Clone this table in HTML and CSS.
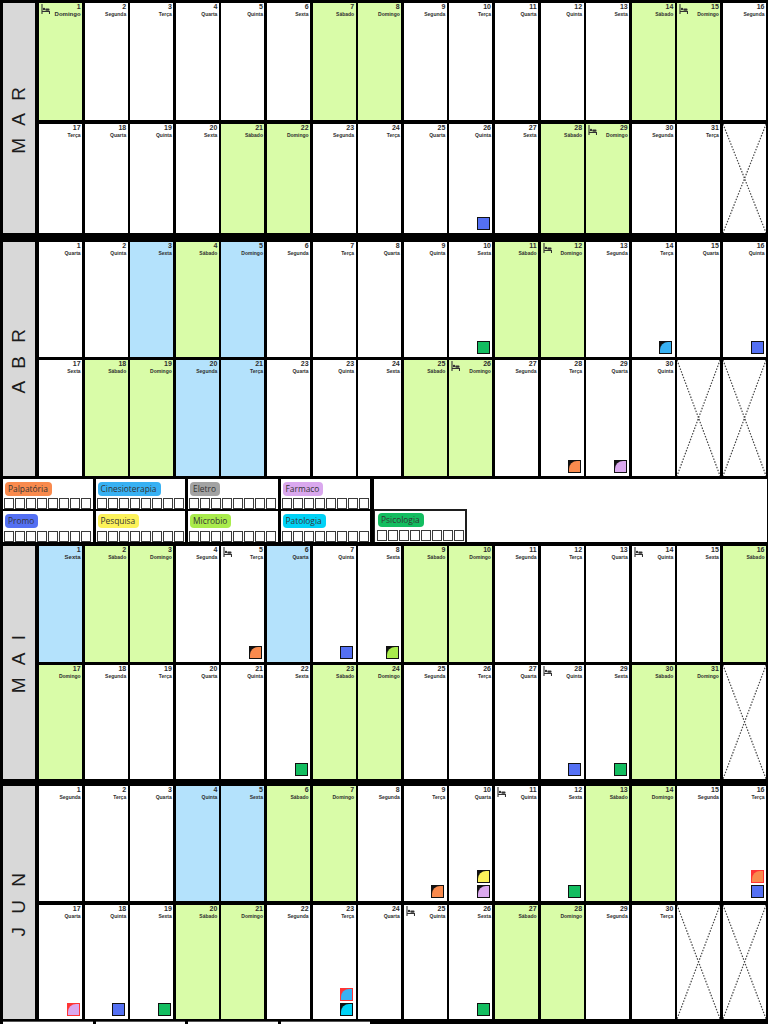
FILE: index.html
```html
<!DOCTYPE html>
<html lang="pt">
<head>
<meta charset="utf-8">
<title>Calendário</title>
<link rel="stylesheet" href="styles.css">
</head>
<body>

<section class="month mar">
  <div class="label"><span>M A R</span></div>
  <div class="days">
    <div class="day we"><div class="hd"><svg class="ic" viewBox="0 0 9 10"><path d="M1 0v10M1 7.5h7.5v2.5" stroke="#333" stroke-width="1.1" fill="none"/><circle cx="3" cy="5" r="1.2" fill="#333"/><rect x="4.3" y="4.6" width="4.2" height="2.2" rx="0.8" fill="#333"/></svg><div class="dt big"><b>1</b><i>Domingo</i></div></div></div>
    <div class="day"><div class="hd"><div class="dt"><b>2</b><i>Segunda</i></div></div></div>
    <div class="day"><div class="hd"><div class="dt"><b>3</b><i>Terça</i></div></div></div>
    <div class="day"><div class="hd"><div class="dt"><b>4</b><i>Quarta</i></div></div></div>
    <div class="day"><div class="hd"><div class="dt"><b>5</b><i>Quinta</i></div></div></div>
    <div class="day"><div class="hd"><div class="dt"><b>6</b><i>Sexta</i></div></div></div>
    <div class="day we"><div class="hd"><div class="dt"><b>7</b><i>Sábado</i></div></div></div>
    <div class="day we"><div class="hd"><div class="dt"><b>8</b><i>Domingo</i></div></div></div>
    <div class="day"><div class="hd"><div class="dt"><b>9</b><i>Segunda</i></div></div></div>
    <div class="day"><div class="hd"><div class="dt"><b>10</b><i>Terça</i></div></div></div>
    <div class="day"><div class="hd"><div class="dt"><b>11</b><i>Quarta</i></div></div></div>
    <div class="day"><div class="hd"><div class="dt"><b>12</b><i>Quinta</i></div></div></div>
    <div class="day"><div class="hd"><div class="dt"><b>13</b><i>Sexta</i></div></div></div>
    <div class="day we"><div class="hd"><div class="dt"><b>14</b><i>Sábado</i></div></div></div>
    <div class="day we"><div class="hd"><svg class="ic" viewBox="0 0 9 10"><path d="M1 0v10M1 7.5h7.5v2.5" stroke="#333" stroke-width="1.1" fill="none"/><circle cx="3" cy="5" r="1.2" fill="#333"/><rect x="4.3" y="4.6" width="4.2" height="2.2" rx="0.8" fill="#333"/></svg><div class="dt"><b>15</b><i>Domingo</i></div></div></div>
    <div class="day"><div class="hd"><div class="dt"><b>16</b><i>Segunda</i></div></div></div>

    <div class="day"><div class="hd"><div class="dt"><b>17</b><i>Terça</i></div></div></div>
    <div class="day"><div class="hd"><div class="dt"><b>18</b><i>Quarta</i></div></div></div>
    <div class="day"><div class="hd"><div class="dt"><b>19</b><i>Quinta</i></div></div></div>
    <div class="day"><div class="hd"><div class="dt"><b>20</b><i>Sexta</i></div></div></div>
    <div class="day we"><div class="hd"><div class="dt"><b>21</b><i>Sábado</i></div></div></div>
    <div class="day we"><div class="hd"><div class="dt"><b>22</b><i>Domingo</i></div></div></div>
    <div class="day"><div class="hd"><div class="dt"><b>23</b><i>Segunda</i></div></div></div>
    <div class="day"><div class="hd"><div class="dt"><b>24</b><i>Terça</i></div></div></div>
    <div class="day"><div class="hd"><div class="dt"><b>25</b><i>Quarta</i></div></div></div>
    <div class="day"><div class="hd"><div class="dt"><b>26</b><i>Quinta</i></div></div><div class="mks"><span class="mk c-promo"></span></div></div>
    <div class="day"><div class="hd"><div class="dt"><b>27</b><i>Sexta</i></div></div></div>
    <div class="day we"><div class="hd"><div class="dt"><b>28</b><i>Sábado</i></div></div></div>
    <div class="day we"><div class="hd"><svg class="ic" viewBox="0 0 9 10"><path d="M1 0v10M1 7.5h7.5v2.5" stroke="#333" stroke-width="1.1" fill="none"/><circle cx="3" cy="5" r="1.2" fill="#333"/><rect x="4.3" y="4.6" width="4.2" height="2.2" rx="0.8" fill="#333"/></svg><div class="dt"><b>29</b><i>Domingo</i></div></div></div>
    <div class="day"><div class="hd"><div class="dt"><b>30</b><i>Segunda</i></div></div></div>
    <div class="day"><div class="hd"><div class="dt"><b>31</b><i>Terça</i></div></div></div>
    <div class="day x"><svg viewBox="0 0 43 110" preserveAspectRatio="none"><path d="M0 0L43 110M43 0L0 110" stroke="#444" stroke-width="1.2" stroke-dasharray="1.5 1.5" fill="none"/></svg></div>
  </div>
</section>

<section class="month abr">
  <div class="label"><span>A B R</span></div>
  <div class="days">
    <div class="day"><div class="hd"><div class="dt"><b>1</b><i>Quarta</i></div></div></div>
    <div class="day"><div class="hd"><div class="dt"><b>2</b><i>Quinta</i></div></div></div>
    <div class="day hol"><div class="hd"><div class="dt"><b>3</b><i>Sexta</i></div></div></div>
    <div class="day we"><div class="hd"><div class="dt"><b>4</b><i>Sábado</i></div></div></div>
    <div class="day hol"><div class="hd"><div class="dt"><b>5</b><i>Domingo</i></div></div></div>
    <div class="day"><div class="hd"><div class="dt"><b>6</b><i>Segunda</i></div></div></div>
    <div class="day"><div class="hd"><div class="dt"><b>7</b><i>Terça</i></div></div></div>
    <div class="day"><div class="hd"><div class="dt"><b>8</b><i>Quarta</i></div></div></div>
    <div class="day"><div class="hd"><div class="dt"><b>9</b><i>Quinta</i></div></div></div>
    <div class="day"><div class="hd"><div class="dt"><b>10</b><i>Sexta</i></div></div><div class="mks"><span class="mk c-psico"></span></div></div>
    <div class="day we"><div class="hd"><div class="dt"><b>11</b><i>Sábado</i></div></div></div>
    <div class="day we"><div class="hd"><svg class="ic" viewBox="0 0 9 10"><path d="M1 0v10M1 7.5h7.5v2.5" stroke="#333" stroke-width="1.1" fill="none"/><circle cx="3" cy="5" r="1.2" fill="#333"/><rect x="4.3" y="4.6" width="4.2" height="2.2" rx="0.8" fill="#333"/></svg><div class="dt"><b>12</b><i>Domingo</i></div></div></div>
    <div class="day"><div class="hd"><div class="dt"><b>13</b><i>Segunda</i></div></div></div>
    <div class="day"><div class="hd"><div class="dt"><b>14</b><i>Terça</i></div></div><div class="mks"><span class="mk cn"><i class="c-cine"></i></span></div></div>
    <div class="day"><div class="hd"><div class="dt"><b>15</b><i>Quarta</i></div></div></div>
    <div class="day"><div class="hd"><div class="dt"><b>16</b><i>Quinta</i></div></div><div class="mks"><span class="mk c-promo"></span></div></div>

    <div class="day"><div class="hd"><div class="dt"><b>17</b><i>Sexta</i></div></div></div>
    <div class="day we"><div class="hd"><div class="dt"><b>18</b><i>Sábado</i></div></div></div>
    <div class="day we"><div class="hd"><div class="dt"><b>19</b><i>Domingo</i></div></div></div>
    <div class="day hol"><div class="hd"><div class="dt"><b>20</b><i>Segunda</i></div></div></div>
    <div class="day hol"><div class="hd"><div class="dt"><b>21</b><i>Terça</i></div></div></div>
    <div class="day"><div class="hd"><div class="dt"><b>23</b><i>Quarta</i></div></div></div>
    <div class="day"><div class="hd"><div class="dt"><b>23</b><i>Quinta</i></div></div></div>
    <div class="day"><div class="hd"><div class="dt"><b>24</b><i>Sexta</i></div></div></div>
    <div class="day we"><div class="hd"><div class="dt"><b>25</b><i>Sábado</i></div></div></div>
    <div class="day we"><div class="hd"><svg class="ic" viewBox="0 0 9 10"><path d="M1 0v10M1 7.5h7.5v2.5" stroke="#333" stroke-width="1.1" fill="none"/><circle cx="3" cy="5" r="1.2" fill="#333"/><rect x="4.3" y="4.6" width="4.2" height="2.2" rx="0.8" fill="#333"/></svg><div class="dt"><b>26</b><i>Domingo</i></div></div></div>
    <div class="day"><div class="hd"><div class="dt"><b>27</b><i>Segunda</i></div></div></div>
    <div class="day"><div class="hd"><div class="dt"><b>28</b><i>Terça</i></div></div><div class="mks"><span class="mk cn"><i class="c-palp"></i></span></div></div>
    <div class="day"><div class="hd"><div class="dt"><b>29</b><i>Quarta</i></div></div><div class="mks"><span class="mk cn"><i class="c-farm"></i></span></div></div>
    <div class="day"><div class="hd"><div class="dt"><b>30</b><i>Quinta</i></div></div></div>
    <div class="day x"><svg viewBox="0 0 43 116" preserveAspectRatio="none"><path d="M0 0L43 116M43 0L0 116" stroke="#444" stroke-width="1.2" stroke-dasharray="1.5 1.5" fill="none"/></svg></div>
    <div class="day x"><svg viewBox="0 0 43 116" preserveAspectRatio="none"><path d="M0 0L43 116M43 0L0 116" stroke="#444" stroke-width="1.2" stroke-dasharray="1.5 1.5" fill="none"/></svg></div>
  </div>
</section>

<section class="legend">
  <div class="lg-grid">
    <div class="lg"><span class="pill c-palp">Palpatória</span><div class="boxes"><i></i><i></i><i></i><i></i><i></i><i></i><i></i><i></i></div></div>
    <div class="lg"><span class="pill c-cine">Cinesioterapia</span><div class="boxes"><i></i><i></i><i></i><i></i><i></i><i></i><i></i><i></i></div></div>
    <div class="lg"><span class="pill c-elet">Eletro</span><div class="boxes"><i></i><i></i><i></i><i></i><i></i><i></i><i></i><i></i></div></div>
    <div class="lg"><span class="pill c-farm">Farmaco</span><div class="boxes"><i></i><i></i><i></i><i></i><i></i><i></i><i></i><i></i></div></div>
    <div class="lg"><span class="pill c-promo">Promo</span><div class="boxes"><i></i><i></i><i></i><i></i><i></i><i></i><i></i><i></i></div></div>
    <div class="lg"><span class="pill c-pesq">Pesquisa</span><div class="boxes"><i></i><i></i><i></i><i></i><i></i><i></i><i></i><i></i></div></div>
    <div class="lg"><span class="pill c-micro">Microbio</span><div class="boxes"><i></i><i></i><i></i><i></i><i></i><i></i><i></i><i></i></div></div>
    <div class="lg"><span class="pill c-pato">Patologia</span><div class="boxes"><i></i><i></i><i></i><i></i><i></i><i></i><i></i><i></i></div></div>
  </div>
  <div class="side">
    <div class="lg lg-framed"><span class="pill c-psico">Psicologia</span><div class="boxes"><i></i><i></i><i></i><i></i><i></i><i></i><i></i><i></i></div></div>
  </div>
</section>

<section class="month mai">
  <div class="label"><span>M A I</span></div>
  <div class="days">
    <div class="day hol"><div class="hd"><div class="dt big"><b>1</b><i>Sexta</i></div></div></div>
    <div class="day we"><div class="hd"><div class="dt"><b>2</b><i>Sábado</i></div></div></div>
    <div class="day we"><div class="hd"><div class="dt"><b>3</b><i>Domingo</i></div></div></div>
    <div class="day"><div class="hd"><div class="dt"><b>4</b><i>Segunda</i></div></div></div>
    <div class="day"><div class="hd"><svg class="ic" viewBox="0 0 9 10"><path d="M1 0v10M1 7.5h7.5v2.5" stroke="#333" stroke-width="1.1" fill="none"/><circle cx="3" cy="5" r="1.2" fill="#333"/><rect x="4.3" y="4.6" width="4.2" height="2.2" rx="0.8" fill="#333"/></svg><div class="dt"><b>5</b><i>Terça</i></div></div><div class="mks"><span class="mk cn"><i class="c-palp"></i></span></div></div>
    <div class="day hol"><div class="hd"><div class="dt"><b>6</b><i>Quarta</i></div></div></div>
    <div class="day"><div class="hd"><div class="dt"><b>7</b><i>Quinta</i></div></div><div class="mks"><span class="mk c-promo"></span></div></div>
    <div class="day"><div class="hd"><div class="dt"><b>8</b><i>Sexta</i></div></div><div class="mks"><span class="mk cn"><i class="c-micro"></i></span></div></div>
    <div class="day we"><div class="hd"><div class="dt"><b>9</b><i>Sábado</i></div></div></div>
    <div class="day we"><div class="hd"><div class="dt"><b>10</b><i>Domingo</i></div></div></div>
    <div class="day"><div class="hd"><div class="dt"><b>11</b><i>Segunda</i></div></div></div>
    <div class="day"><div class="hd"><div class="dt"><b>12</b><i>Terça</i></div></div></div>
    <div class="day"><div class="hd"><div class="dt"><b>13</b><i>Quarta</i></div></div></div>
    <div class="day"><div class="hd"><svg class="ic" viewBox="0 0 9 10"><path d="M1 0v10M1 7.5h7.5v2.5" stroke="#333" stroke-width="1.1" fill="none"/><circle cx="3" cy="5" r="1.2" fill="#333"/><rect x="4.3" y="4.6" width="4.2" height="2.2" rx="0.8" fill="#333"/></svg><div class="dt"><b>14</b><i>Quinta</i></div></div></div>
    <div class="day"><div class="hd"><div class="dt"><b>15</b><i>Sexta</i></div></div></div>
    <div class="day we"><div class="hd"><div class="dt"><b>16</b><i>Sábado</i></div></div></div>

    <div class="day we"><div class="hd"><div class="dt"><b>17</b><i>Domingo</i></div></div></div>
    <div class="day"><div class="hd"><div class="dt"><b>18</b><i>Segunda</i></div></div></div>
    <div class="day"><div class="hd"><div class="dt"><b>19</b><i>Terça</i></div></div></div>
    <div class="day"><div class="hd"><div class="dt"><b>20</b><i>Quarta</i></div></div></div>
    <div class="day"><div class="hd"><div class="dt"><b>21</b><i>Quinta</i></div></div></div>
    <div class="day"><div class="hd"><div class="dt"><b>22</b><i>Sexta</i></div></div><div class="mks"><span class="mk c-psico"></span></div></div>
    <div class="day we"><div class="hd"><div class="dt"><b>23</b><i>Sábado</i></div></div></div>
    <div class="day we"><div class="hd"><div class="dt"><b>24</b><i>Domingo</i></div></div></div>
    <div class="day"><div class="hd"><div class="dt"><b>25</b><i>Segunda</i></div></div></div>
    <div class="day"><div class="hd"><div class="dt"><b>26</b><i>Terça</i></div></div></div>
    <div class="day"><div class="hd"><div class="dt"><b>27</b><i>Quarta</i></div></div></div>
    <div class="day"><div class="hd"><svg class="ic" viewBox="0 0 9 10"><path d="M1 0v10M1 7.5h7.5v2.5" stroke="#333" stroke-width="1.1" fill="none"/><circle cx="3" cy="5" r="1.2" fill="#333"/><rect x="4.3" y="4.6" width="4.2" height="2.2" rx="0.8" fill="#333"/></svg><div class="dt"><b>28</b><i>Quinta</i></div></div><div class="mks"><span class="mk c-promo"></span></div></div>
    <div class="day"><div class="hd"><div class="dt"><b>29</b><i>Sexta</i></div></div><div class="mks"><span class="mk c-psico"></span></div></div>
    <div class="day we"><div class="hd"><div class="dt"><b>30</b><i>Sábado</i></div></div></div>
    <div class="day we"><div class="hd"><div class="dt"><b>31</b><i>Domingo</i></div></div></div>
    <div class="day x"><svg viewBox="0 0 43 114" preserveAspectRatio="none"><path d="M0 0L43 114M43 0L0 114" stroke="#444" stroke-width="1.2" stroke-dasharray="1.5 1.5" fill="none"/></svg></div>
  </div>
</section>

<section class="month jun">
  <div class="label"><span>J U N</span></div>
  <div class="days">
    <div class="day"><div class="hd"><div class="dt"><b>1</b><i>Segunda</i></div></div></div>
    <div class="day"><div class="hd"><div class="dt"><b>2</b><i>Terça</i></div></div></div>
    <div class="day"><div class="hd"><div class="dt"><b>3</b><i>Quarta</i></div></div></div>
    <div class="day hol"><div class="hd"><div class="dt"><b>4</b><i>Quinta</i></div></div></div>
    <div class="day hol"><div class="hd"><div class="dt"><b>5</b><i>Sexta</i></div></div></div>
    <div class="day we"><div class="hd"><div class="dt"><b>6</b><i>Sábado</i></div></div></div>
    <div class="day we"><div class="hd"><div class="dt"><b>7</b><i>Domingo</i></div></div></div>
    <div class="day"><div class="hd"><div class="dt"><b>8</b><i>Segunda</i></div></div></div>
    <div class="day"><div class="hd"><div class="dt"><b>9</b><i>Terça</i></div></div><div class="mks"><span class="mk cn"><i class="c-palp"></i></span></div></div>
    <div class="day"><div class="hd"><div class="dt"><b>10</b><i>Quarta</i></div></div><div class="mks"><span class="mk cn"><i class="c-pesq"></i></span><span class="mk cn"><i class="c-farm"></i></span></div></div>
    <div class="day"><div class="hd"><svg class="ic" viewBox="0 0 9 10"><path d="M1 0v10M1 7.5h7.5v2.5" stroke="#333" stroke-width="1.1" fill="none"/><circle cx="3" cy="5" r="1.2" fill="#333"/><rect x="4.3" y="4.6" width="4.2" height="2.2" rx="0.8" fill="#333"/></svg><div class="dt"><b>11</b><i>Quinta</i></div></div></div>
    <div class="day"><div class="hd"><div class="dt"><b>12</b><i>Sexta</i></div></div><div class="mks"><span class="mk c-psico"></span></div></div>
    <div class="day we"><div class="hd"><div class="dt"><b>13</b><i>Sábado</i></div></div></div>
    <div class="day we"><div class="hd"><div class="dt"><b>14</b><i>Domingo</i></div></div></div>
    <div class="day"><div class="hd"><div class="dt"><b>15</b><i>Segunda</i></div></div></div>
    <div class="day"><div class="hd"><div class="dt"><b>16</b><i>Terça</i></div></div><div class="mks"><span class="mk cn red"><i class="c-palp"></i></span><span class="mk c-promo"></span></div></div>

    <div class="day"><div class="hd"><div class="dt"><b>17</b><i>Quarta</i></div></div><div class="mks"><span class="mk cn red"><i class="c-farm"></i></span></div></div>
    <div class="day"><div class="hd"><div class="dt"><b>18</b><i>Quinta</i></div></div><div class="mks"><span class="mk c-promo"></span></div></div>
    <div class="day"><div class="hd"><div class="dt"><b>19</b><i>Sexta</i></div></div><div class="mks"><span class="mk c-psico"></span></div></div>
    <div class="day we"><div class="hd"><div class="dt"><b>20</b><i>Sábado</i></div></div></div>
    <div class="day we"><div class="hd"><div class="dt"><b>21</b><i>Domingo</i></div></div></div>
    <div class="day"><div class="hd"><div class="dt"><b>22</b><i>Segunda</i></div></div></div>
    <div class="day"><div class="hd"><div class="dt"><b>23</b><i>Terça</i></div></div><div class="mks"><span class="mk cn red"><i class="c-cine"></i></span><span class="mk cn"><i class="c-pato"></i></span></div></div>
    <div class="day"><div class="hd"><div class="dt"><b>24</b><i>Quarta</i></div></div></div>
    <div class="day"><div class="hd"><svg class="ic" viewBox="0 0 9 10"><path d="M1 0v10M1 7.5h7.5v2.5" stroke="#333" stroke-width="1.1" fill="none"/><circle cx="3" cy="5" r="1.2" fill="#333"/><rect x="4.3" y="4.6" width="4.2" height="2.2" rx="0.8" fill="#333"/></svg><div class="dt"><b>25</b><i>Quinta</i></div></div></div>
    <div class="day"><div class="hd"><div class="dt"><b>26</b><i>Sexta</i></div></div><div class="mks"><span class="mk c-psico"></span></div></div>
    <div class="day we"><div class="hd"><div class="dt"><b>27</b><i>Sábado</i></div></div></div>
    <div class="day we"><div class="hd"><div class="dt"><b>28</b><i>Domingo</i></div></div></div>
    <div class="day"><div class="hd"><div class="dt"><b>29</b><i>Segunda</i></div></div></div>
    <div class="day"><div class="hd"><div class="dt"><b>30</b><i>Terça</i></div></div></div>
    <div class="day x"><svg viewBox="0 0 43 114" preserveAspectRatio="none"><path d="M0 0L43 114M43 0L0 114" stroke="#444" stroke-width="1.2" stroke-dasharray="1.5 1.5" fill="none"/></svg></div>
    <div class="day x"><svg viewBox="0 0 43 114" preserveAspectRatio="none"><path d="M0 0L43 114M43 0L0 114" stroke="#444" stroke-width="1.2" stroke-dasharray="1.5 1.5" fill="none"/></svg></div>
  </div>
</section>

<div class="strip"><span></span><span></span><span></span><span></span></div>

</body>
</html>
```

FILE: styles.css
```css
* { box-sizing: border-box; margin: 0; padding: 0; }

html, body { background: #000; }

body {
  width: 768px;
  height: 1024px;
  overflow: hidden;
  padding-top: 3px;
  font-family: "Liberation Sans", Arial, sans-serif;
}

/* ---------- month blocks ---------- */
.month {
  display: flex;
  gap: 4px;
  padding: 0 2px 0 3px;
}

.label {
  width: 32px;
  flex: none;
  background: #d8d8d8;
  display: flex;
  align-items: center;
  justify-content: center;
}

.label span {
  writing-mode: vertical-rl;
  transform: rotate(180deg);
  font-size: 19px;
  letter-spacing: 4px;
  color: #1c1c1c;
  white-space: pre;
}

.days {
  flex: 1;
  display: grid;
  grid-template-columns: repeat(16, 1fr);
  column-gap: 2.5px;
}

.mar { margin-bottom: 9px; }
.mar .days { grid-template-rows: 117px 109px; row-gap: 4px; }

.abr .days { grid-template-rows: 115px 116px; row-gap: 3px; }

.mai { margin-bottom: 7px; }
.mai .days { grid-template-rows: 116px 114px; row-gap: 3px; }

.jun .days { grid-template-rows: 115px 114px; row-gap: 4px; }

/* ---------- day cells ---------- */
.day {
  background: #fff;
  display: flex;
  flex-direction: column;
  min-width: 0;
  overflow: hidden;
}

.day.we { background: #d9fca8; }
.day.hol { background: #b4e2fc; }

.hd {
  display: flex;
  justify-content: space-between;
  align-items: flex-start;
  padding: 0 1.5px 0 2px;
}

.dt {
  margin-left: auto;
  text-align: right;
  color: #2e2e2e;
  font-weight: 700;
}

.dt b {
  display: block;
  font-size: 7px;
  line-height: 8px;
}

.dt i {
  display: block;
  font-style: normal;
  font-size: 5px;
  line-height: 6px;
}

.dt.big i {
  font-size: 6px;
  line-height: 7px;
}

.ic {
  width: 9px;
  height: 10px;
  margin-top: 1px;
}

/* ---------- markers ---------- */
.mks {
  margin-top: auto;
  align-self: flex-end;
  display: flex;
  flex-direction: column;
  gap: 2px;
  padding: 0 2.5px 3px 0;
}

.mk {
  display: block;
  width: 13px;
  height: 13px;
  border: 1.5px solid #111;
}

.mk.cn { background: #111; }

.mk.cn i {
  display: block;
  width: 100%;
  height: 100%;
  border-top-left-radius: 8px;
}

.mk.red { border-color: #ff3434; }
.mk.red.cn { background: #ff3434; }

.day.x svg {
  display: block;
  width: 100%;
  height: 100%;
}

/* ---------- colours ---------- */
.c-palp  { background: #f98a4d; }
.c-cine  { background: #38b1f3; }
.c-elet  { background: #a3a3a3; }
.c-farm  { background: #daa8ee; }
.c-promo { background: #5470f3; }
.c-pesq  { background: #fcf25a; }
.c-micro { background: #a9ec4c; }
.c-pato  { background: #00d2f6; }
.c-psico { background: #13bd60; }

/* ---------- legend ---------- */
.legend {
  display: flex;
  gap: 4px;
  height: 63px;
  margin: 3px 0 4px;
  padding: 0 1px 0 3px;
}

.lg-grid {
  display: grid;
  grid-template-columns: repeat(4, 89.5px);
  grid-template-rows: 30px 31px;
  gap: 2px 3px;
}

.lg {
  background: #fff;
  display: flex;
  flex-direction: column;
  justify-content: space-between;
  padding: 3px 1px 0;
}

.pill {
  align-self: flex-start;
  height: 14px;
  padding: 0 4px 0 3px;
  margin-left: 1px;
  border-radius: 4px;
  font-family: "Open Sans", "Noto Sans", sans-serif;
  font-size: 8.4px;
  line-height: 14px;
  color: #333;
}

.boxes {
  display: flex;
  gap: 1px;
}

.boxes i {
  display: block;
  width: 10px;
  height: 11px;
  border: 1.3px solid #3a3a3a;
  background: #fff;
}

.side {
  flex: 1;
  background: #fff;
  display: flex;
  align-items: flex-end;
}

.lg-framed {
  width: 93px;
  height: 33px;
  border: 2px solid #1e1e1e;
  border-left-width: 1px;
  border-bottom: 0;
  padding: 2px 1px 1px 2px;
}

/* ---------- cut-off strip at the bottom edge ---------- */
.strip {
  display: grid;
  grid-template-columns: repeat(4, 89.5px);
  column-gap: 3px;
  height: 3px;
  margin-top: 2px;
  padding-left: 3px;
}

.strip span {
  background: #fff;
  border-top: 1px solid #555;
}
```
